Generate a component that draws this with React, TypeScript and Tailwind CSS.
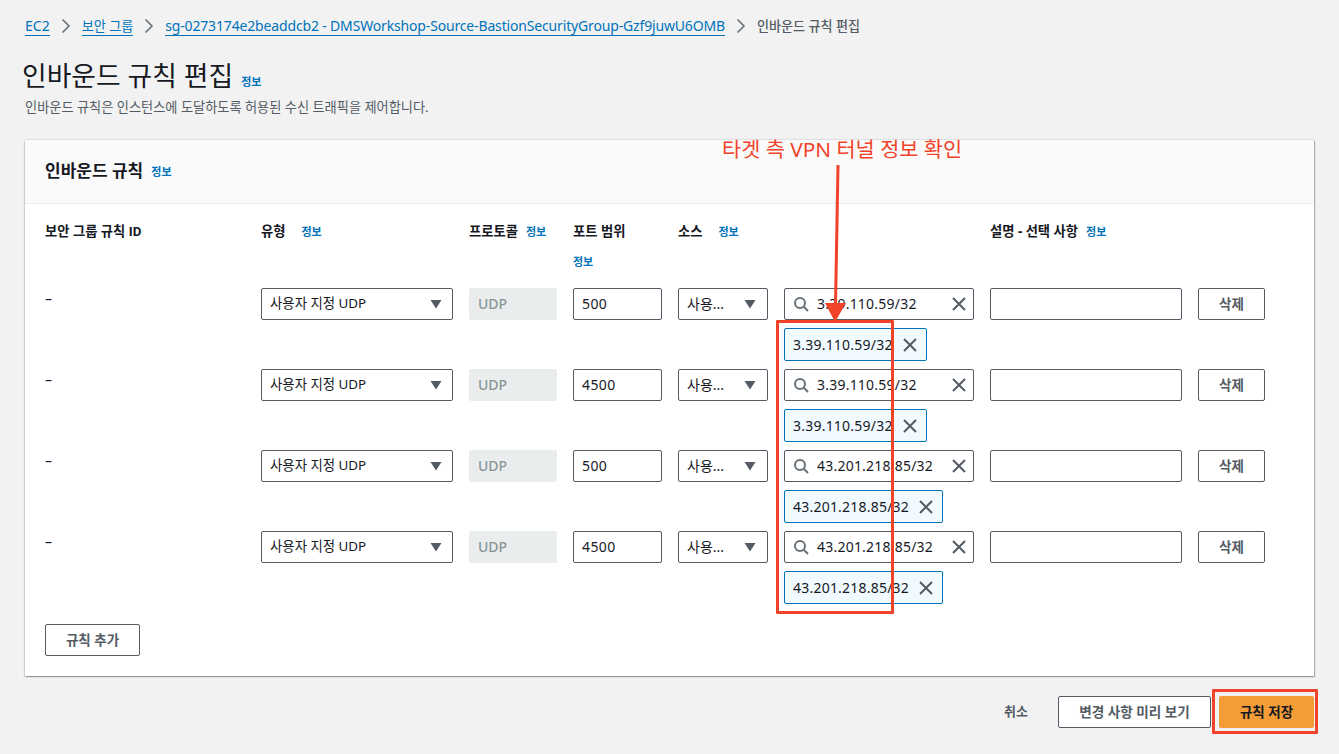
import React from "react";

const font = { fontFamily: '"Noto Sans", "Noto Sans CJK KR", sans-serif' };

function Info({ className = "" }: { className?: string }) {
  return <a className={"text-[11px] leading-[16px] font-bold text-[#0073bb] " + className}>정보</a>;
}

function Chevron() {
  return (
    <svg width="16" height="16" viewBox="0 0 16 16" fill="none" stroke="#687078" strokeWidth="1.6" className="mx-[8px] shrink-0">
      <path d="M4.5 1.5 11 8l-6.5 6.5" />
    </svg>
  );
}

function Caret() {
  return (
    <svg width="12" height="10" viewBox="0 0 12 10" className="shrink-0">
      <path d="M0.5 1h11L6 9.5z" fill="#545b64" />
    </svg>
  );
}

function Cross() {
  return (
    <svg width="16" height="16" viewBox="0 0 16 16" fill="none" stroke="#545b64" strokeWidth="2" className="shrink-0">
      <path d="M2 2l12 12M14 2 2 14" />
    </svg>
  );
}

function Search() {
  return (
    <svg width="16" height="16" viewBox="0 0 16 16" fill="none" stroke="#687078" strokeWidth="2" className="shrink-0">
      <circle cx="7" cy="7" r="5" />
      <path d="M10.8 10.8 15 15" />
    </svg>
  );
}

const box = "h-[32px] rounded-[2px] border border-[#545b64] bg-white flex items-center text-[14px] text-[#16191f]";
const grid = "grid grid-cols-[200px_192px_88px_89px_90px_190px_192px_67px] gap-x-[16px]";

function Rule({ port, ip }: { port: string; ip: string }) {
  return (
    <div className={grid + " h-[81px]"}>
      <div className="pt-[1px] text-[14px] leading-[20px] text-[#16191f]">–</div>
      <div className={box + " justify-between pl-[8px] pr-[10px]"}>
        <span className="pb-[1px] text-[13.4px]">사용자 지정 UDP</span>
        <Caret />
      </div>
      <div className="h-[32px] rounded-[2px] bg-[#eaeded] flex items-center pl-[9px] pb-[1px] text-[14px] font-medium text-[#879596]">UDP</div>
      <div className={box + " pl-[8px]"}>
        <span className="pb-[1px] tracking-[0.4px]">{port}</span>
      </div>
      <div className={box + " justify-between pl-[8px] pr-[11px]"}>
        <span className="pb-[1px]">사용...</span>
        <Caret />
      </div>
      <div className="flex flex-col items-start gap-[8px]">
        <div className={box + " w-full pl-[8px] pr-[6px] justify-between"}>
          <div className="flex items-center gap-[8px]">
            <Search />
            <span className="pb-[1px] tracking-[0.22px]">{ip}</span>
          </div>
          <Cross />
        </div>
        <div className="h-[33px] rounded-[2px] border border-[#0073bb] bg-[#f1faff] flex items-center pl-[8px] pr-[8px] gap-[9px] text-[14px] text-[#16191f]">
          <span className="tracking-[0.22px]">{ip}</span>
          <Cross />
        </div>
      </div>
      <div className={box} />
      <button className="h-[32px] rounded-[2px] border border-[#545b64] bg-white text-[13.5px] font-bold text-[#545b64]">삭제</button>
    </div>
  );
}

export default function App() {
  return (
    <div className="relative h-[754px] w-[1339px] overflow-hidden bg-[#f2f2f2] px-[25px]" style={font}>
      <nav className="flex h-[53px] items-center pb-[1px] text-[14px] leading-[20px]">
        <a className="text-[#0073bb] border-b border-[#0073bb] leading-[18px]">EC2</a>
        <Chevron />
        <a className="text-[#0073bb] border-b border-[#0073bb] leading-[18px] text-[13.1px]">보안 그룹</a>
        <Chevron />
        <a className="text-[#0073bb] border-b border-[#0073bb] leading-[18px] tracking-[-0.16px]">sg-0273174e2beaddcb2 - DMSWorkshop-Source-BastionSecurityGroup-Gzf9juwU6OMB</a>
        <Chevron />
        <span className="text-[13.1px] font-medium text-[#545b64]">인바운드 규칙 편집</span>
      </nav>

      <div className="flex h-[42px] items-end">
        <h1 className="text-[26.8px] leading-[38px] font-normal text-[#16191f] -ml-[3px]">인바운드 규칙 편집</h1>
        <Info className="ml-[8px] mb-[5px]" />
      </div>
      <p className="text-[13.2px] leading-[20px] pt-[2px] text-[#545b64]">인바운드 규칙은 인스턴스에 도달하도록 허용된 수신 트래픽을 제어합니다.</p>

      <section className="mt-[23px] h-[536px] w-[1289px] bg-white shadow-[1px_1px_1px_0_rgba(0,28,36,0.3),-1px_1px_1px_0_rgba(0,28,36,0.15),0_-1px_1px_0_rgba(0,28,36,0.08)]">
        <header className="flex h-[64px] items-center border-b border-[#eaeded] bg-[#fafafa] pl-[20px] pb-[2px]">
          <h2 className="text-[17px] leading-[24px] font-bold text-[#16191f]">인바운드 규칙</h2>
          <Info className="ml-[8px] mt-[2px]" />
        </header>

        <div className="pl-[20px] pt-[17px]">
          <div className={grid + " h-[67px] text-[13.3px] leading-[20px] font-bold text-[#16191f]"}>
            <div>
              보안 그룹 규칙 <span className="font-['Roboto']">ID</span>
            </div>
            <div className="flex items-start gap-[16px]">
              <span>유형</span>
              <Info className="pt-[3px]" />
            </div>
            <div className="flex items-start gap-[8px] whitespace-nowrap">
              <span>프로토콜</span>
              <Info className="pt-[3px]" />
            </div>
            <div className="flex flex-col gap-[13px]">
              <span>포트 범위</span>
              <Info />
            </div>
            <div className="flex items-start gap-[16px]">
              <span>소스</span>
              <Info className="pt-[3px]" />
            </div>
            <div />
            <div className="col-span-2 flex items-start gap-[8px]">
              <span>설명 - 선택 사항</span>
              <Info className="pt-[3px]" />
            </div>
          </div>

          <Rule port="500" ip="3.39.110.59/32" />
          <Rule port="4500" ip="3.39.110.59/32" />
          <Rule port="500" ip="43.201.218.85/32" />
          <Rule port="4500" ip="43.201.218.85/32" />

          <button className="mt-[12px] h-[32px] w-[95px] rounded-[2px] border border-[#545b64] bg-white text-[13.5px] font-bold text-[#545b64]">규칙 추가</button>
        </div>
      </section>

      <footer className="mt-[20px] flex h-[32px] w-[1289px] items-center justify-end">
        <span className="text-[13px] font-bold text-[#545b64] mr-[30px]">취소</span>
        <button className="h-[32px] w-[153px] rounded-[2px] border border-[#545b64] bg-white text-[13.6px] font-bold text-[#545b64] mr-[8px]">변경 사항 미리 보기</button>
        <button className="h-[32px] w-[95px] rounded-[2px] bg-[#f49d36] text-[13.5px] font-bold text-[#16191f]">규칙 저장</button>
      </footer>

      {/* Annotation overlay drawn on top of the page */}
      <span className="absolute left-[722px] top-[135px] text-[20.8px] leading-[28px] text-[#f1432a]">타겟 측 VPN 터널 정보 확인</span>
      <svg className="absolute left-[820px] top-[160px]" width="36" height="166" viewBox="0 0 36 166">
        <path d="M18 5 15.5 146" stroke="#f1432a" strokeWidth="3" fill="none" />
        <path d="M5 143 15 162 26 143z" fill="#f1432a" />
      </svg>
      <div className="absolute left-[776px] top-[320px] h-[294px] w-[118px] rounded-[1px] border-[3px] border-[#f1432a]" />
      <div className="absolute left-[1212px] top-[689px] h-[45px] w-[106px] rounded-[1px] border-[3px] border-[#f1432a]" />
    </div>
  );
}
